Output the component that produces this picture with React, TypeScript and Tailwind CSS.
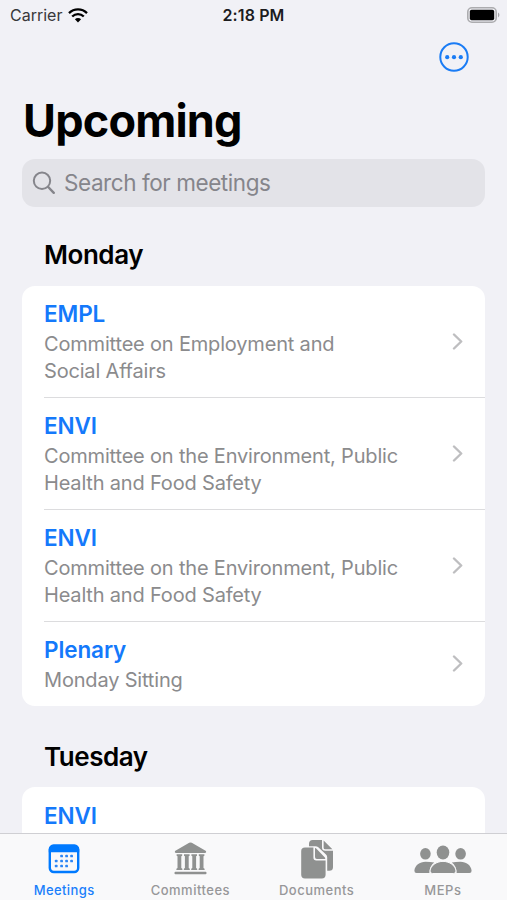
import type { ReactNode } from 'react'
import clsx from 'clsx'

interface Meeting {
  title: string
  subtitle?: string[]
}

interface Section {
  day: string
  meetings: Meeting[]
}

const sections: Section[] = [
  {
    day: 'Monday',
    meetings: [
      { title: 'EMPL', subtitle: ['Committee on Employment and', 'Social Affairs'] },
      { title: 'ENVI', subtitle: ['Committee on the Environment, Public', 'Health and Food Safety'] },
      { title: 'ENVI', subtitle: ['Committee on the Environment, Public', 'Health and Food Safety'] },
      { title: 'Plenary', subtitle: ['Monday Sitting'] },
    ],
  },
  {
    day: 'Tuesday',
    meetings: [{ title: 'ENVI' }],
  },
]

function WifiIcon() {
  return (
    <svg width="20" height="15" viewBox="0 0 20 15" fill="none" stroke="#000" strokeWidth="2.3">
      <path d="M1 5.1a12.8 12.8 0 0 1 18 0" />
      <path d="M4.2 8.5a8.2 8.2 0 0 1 11.6 0" />
      <path d="M10 14.4 6.9 11.3a4.4 4.4 0 0 1 6.2 0Z" fill="#000" stroke="none" />
    </svg>
  )
}

function BatteryIcon() {
  return (
    <svg width="33" height="16" viewBox="0 0 33 16">
      <rect x="0.8" y="0.8" width="28.4" height="14.4" rx="4.2" fill="none" stroke="#acacaf" strokeWidth="1.6" />
      <rect x="2.8" y="2.8" width="24.4" height="10.4" rx="1.8" fill="#000" />
      <path d="M31 5.6c1.9.9 1.9 3.9 0 4.8Z" fill="#a6a6aa" />
    </svg>
  )
}

function MoreIcon() {
  return (
    <svg width="30" height="30" viewBox="0 0 30 30">
      <circle cx="15" cy="15" r="13.7" fill="none" stroke="#1a7cf5" strokeWidth="2" />
      <circle cx="8.2" cy="15.2" r="2.1" fill="#1a7cf5" />
      <circle cx="15" cy="15.2" r="2.1" fill="#1a7cf5" />
      <circle cx="21.8" cy="15.2" r="2.1" fill="#1a7cf5" />
    </svg>
  )
}

function SearchIcon() {
  return (
    <svg width="24" height="24" viewBox="0 0 24 24" fill="none" stroke="#85858b" strokeWidth="2" strokeLinecap="round">
      <circle cx="10" cy="9.8" r="8.2" />
      <path d="m16.2 16 5.6 5.8" strokeWidth="2.4" />
    </svg>
  )
}

function ChevronIcon() {
  return (
    <svg
      className="mb-[2px]"
      width="11"
      height="17"
      viewBox="0 0 11 17"
      fill="none"
      stroke="#bebec0"
      strokeWidth="2.4"
      strokeLinecap="round"
      strokeLinejoin="round"
    >
      <path d="m2 1.5 7.2 7-7.2 7" />
    </svg>
  )
}

function CalendarIcon() {
  const dots = [
    [13.6, 12], [18.6, 12], [23.6, 12],
    [8.2, 17], [13.6, 17], [18.6, 17], [23.6, 17],
    [8.2, 22], [13.6, 22], [18.6, 22],
  ]
  return (
    <svg width="32" height="30" viewBox="0 0 32 30">
      <rect x="1.8" y="1.6" width="28.4" height="26.4" rx="4" fill="none" stroke="#007aff" strokeWidth="2.4" />
      <path d="M.8 8.2V5.2A4.6 4.6 0 0 1 5.4.6h21.2a4.6 4.6 0 0 1 4.6 4.6v3Z" fill="#007aff" />
      {dots.map(([x, y]) => (
        <rect key={`${x}-${y}`} x={x - 1.4} y={y - 1.3} width="2.8" height="2.6" rx="0.9" fill="#2d86f5" />
      ))}
    </svg>
  )
}

function ColumnsIcon() {
  return (
    <svg width="33" height="33" viewBox="0 0 33 33" fill="#8f9190">
      <path d="M1 9 15.2.8q1.3-.8 2.6 0L32 9q.7 1.7-.8 2H1.8Q.3 10.700 1 9Z" />
      {[5.4, 12.8, 20.2, 27.6].map((x) => (
        <path
          key={x}
          d={`M${x - 2.8} 12.200h5.600v1.500l-.9.5v11.700l1.100.8v1.400h-6v-1.400l1.100-.8V14.200l-.9-.5Z`}
        />
      ))}
      <rect x="0.5" y="29.8" width="32" height="2.4" rx="0.9" />
    </svg>
  )
}

function DocumentsIcon() {
  return (
    <svg width="34" height="40" viewBox="0 0 34 40" fill="#8f9190">
      <path d="M9 7.200V4.800Q9 1 12.800 1H22v7.500q0 3.300 3.300 3.300H33v16.400q0 3.600-3.800 3.600h-2V18.400q0-1.700-1.200-2.900L18 8.100q-1-.9-2.400-.9Z" />
      <path d="M23.600 1.500v7.200q0 1.500 1.500 1.500h7.300Z" />
      <path d="M5 8.600h8.400v10q0 2.900 2.900 2.900h9.300v14.300q0 3.700-3.800 3.700H5q-3.800 0-3.800-3.700V12.300q0-3.700 3.800-3.700Z" />
      <path d="M15 9v9q0 1.900 1.900 1.900h8.400q-.1-1-.9-1.800l-7.700-8.200q-.7-.8-1.700-.9Z" />
    </svg>
  )
}

function PeopleIcon() {
  return (
    <svg className="mt-px" width="58" height="29" viewBox="0 0 58 29" fill="#8f9190">
      <ellipse cx="11.4" cy="8.8" rx="5.3" ry="5.8" />
      <ellipse cx="46.6" cy="8.8" rx="5.3" ry="5.8" />
      <ellipse cx="29" cy="7.5" rx="6.3" ry="6.9" />
      <path d="M20.200 17.600Q15.800 20.600 15.300 28H2.500Q.4 28 .4 25.800C.8 20.600 5.600 16.800 11.600 16.800q5 0 8.600.8Z" />
      <path d="M37.800 17.600Q42.200 20.600 42.700 28h12.800q2.100 0 2.100-2.200c-.4-5.200-5.200-9-11.200-9q-5 0-8.600.8Z" />
      <path
        d="M18.500 28.500q-2.500 0-2.500-2.500C16.500 20.500 22.500 16.400 29 16.400s12.500 4.100 13 9.600q0 2.500-2.500 2.500Z"
        stroke="#f9f9fa"
        strokeWidth="1"
      />
    </svg>
  )
}

function MeetingRow({ meeting, last }: { meeting: Meeting; last: boolean }) {
  return (
    <li
      className={clsx(
        'ml-[22px] pt-[13px] pr-[22px] pb-3 flex items-center justify-between',
        !last && 'border-b border-[#dcdcde]',
        !meeting.subtitle && 'h-28',
      )}
    >
      <div className="self-start">
        <h3 className="text-[22.5px] leading-[30px] font-semibold tracking-[-0.1px] text-[#1479fb]">
          {meeting.title}
        </h3>
        {meeting.subtitle && (
          <p className="mt-[2px] text-[20px] leading-[27px] tracking-[-0.18px] text-[#8b8b8d] whitespace-nowrap">
            {meeting.subtitle.map((line) => (
              <span key={line} className="block">
                {line}
              </span>
            ))}
          </p>
        )}
      </div>
      <ChevronIcon />
    </li>
  )
}

function Tab({ label, active, children }: { label: string; active?: boolean; children: ReactNode }) {
  return (
    <button
      className={clsx(
        'flex-1 flex flex-col items-center text-[13px] leading-4 font-medium',
        active ? 'tracking-[0.4px] text-[#1a7ffa]' : 'tracking-[0.5px] text-[#979799]',
      )}
    >
      <span className="h-[47px] flex items-center justify-center">{children}</span>
      {label}
    </button>
  )
}

export default function App() {
  return (
    <div className="h-[900px] w-[507px] overflow-hidden flex flex-col bg-[#f1f1f6] font-['Inter',sans-serif]">
      {/* Status bar */}
      <header className="h-[30px] shrink-0 grid grid-cols-3 items-center pl-[10px] pr-[7px] text-[16px]">
        <div className="flex items-center gap-[6px] text-[#38383a]">
          Carrier
          <WifiIcon />
        </div>
        <div className="pr-[3px] text-center font-semibold tracking-[0.1px] text-[#1c1c1e]">2:18 PM</div>
        <div className="flex justify-end">
          <BatteryIcon />
        </div>
      </header>

      <div className="shrink-0 flex justify-end pt-3 pr-[38px]">
        <button aria-label="More">
          <MoreIcon />
        </button>
      </div>

      <main className="flex-1 min-h-0 overflow-hidden px-[22px]">
        <h1 className="mt-[21px] pl-px text-[45px] leading-[56px] font-bold tracking-[-0.8px] text-black">Upcoming</h1>
        <div className="mt-[10px] h-12 rounded-[13px] bg-[#e3e3e8] flex items-center gap-2 pl-[10px] text-[22.5px] tracking-[-0.43px] text-[#85858b]">
          <SearchIcon />
          <span>Search for meetings</span>
        </div>

        {/* Meetings by day */}
        {sections.map((section, index) => (
          <section key={section.day} className={index === 0 ? 'pt-[31px]' : 'pt-[34px]'}>
            <h2 className="pl-[22px] text-[26px] leading-[34px] font-semibold tracking-[-0.45px] text-black">
              {section.day}
            </h2>
            <ul className={clsx('rounded-[13px] bg-white', index === 0 ? 'mt-[14px]' : 'mt-[13px] pt-px')}>
              {section.meetings.map((meeting, i) => (
                <MeetingRow key={i} meeting={meeting} last={i === section.meetings.length - 1} />
              ))}
            </ul>
          </section>
        ))}
      </main>

      <nav className="h-[67px] shrink-0 flex items-start border-t border-[#cfcfd3] bg-[#f9f9fa] pt-px px-px">
        <Tab label="Meetings" active>
          <CalendarIcon />
        </Tab>
        <Tab label="Committees">
          <ColumnsIcon />
        </Tab>
        <Tab label="Documents">
          <DocumentsIcon />
        </Tab>
        <Tab label="MEPs">
          <PeopleIcon />
        </Tab>
      </nav>
    </div>
  )
}
